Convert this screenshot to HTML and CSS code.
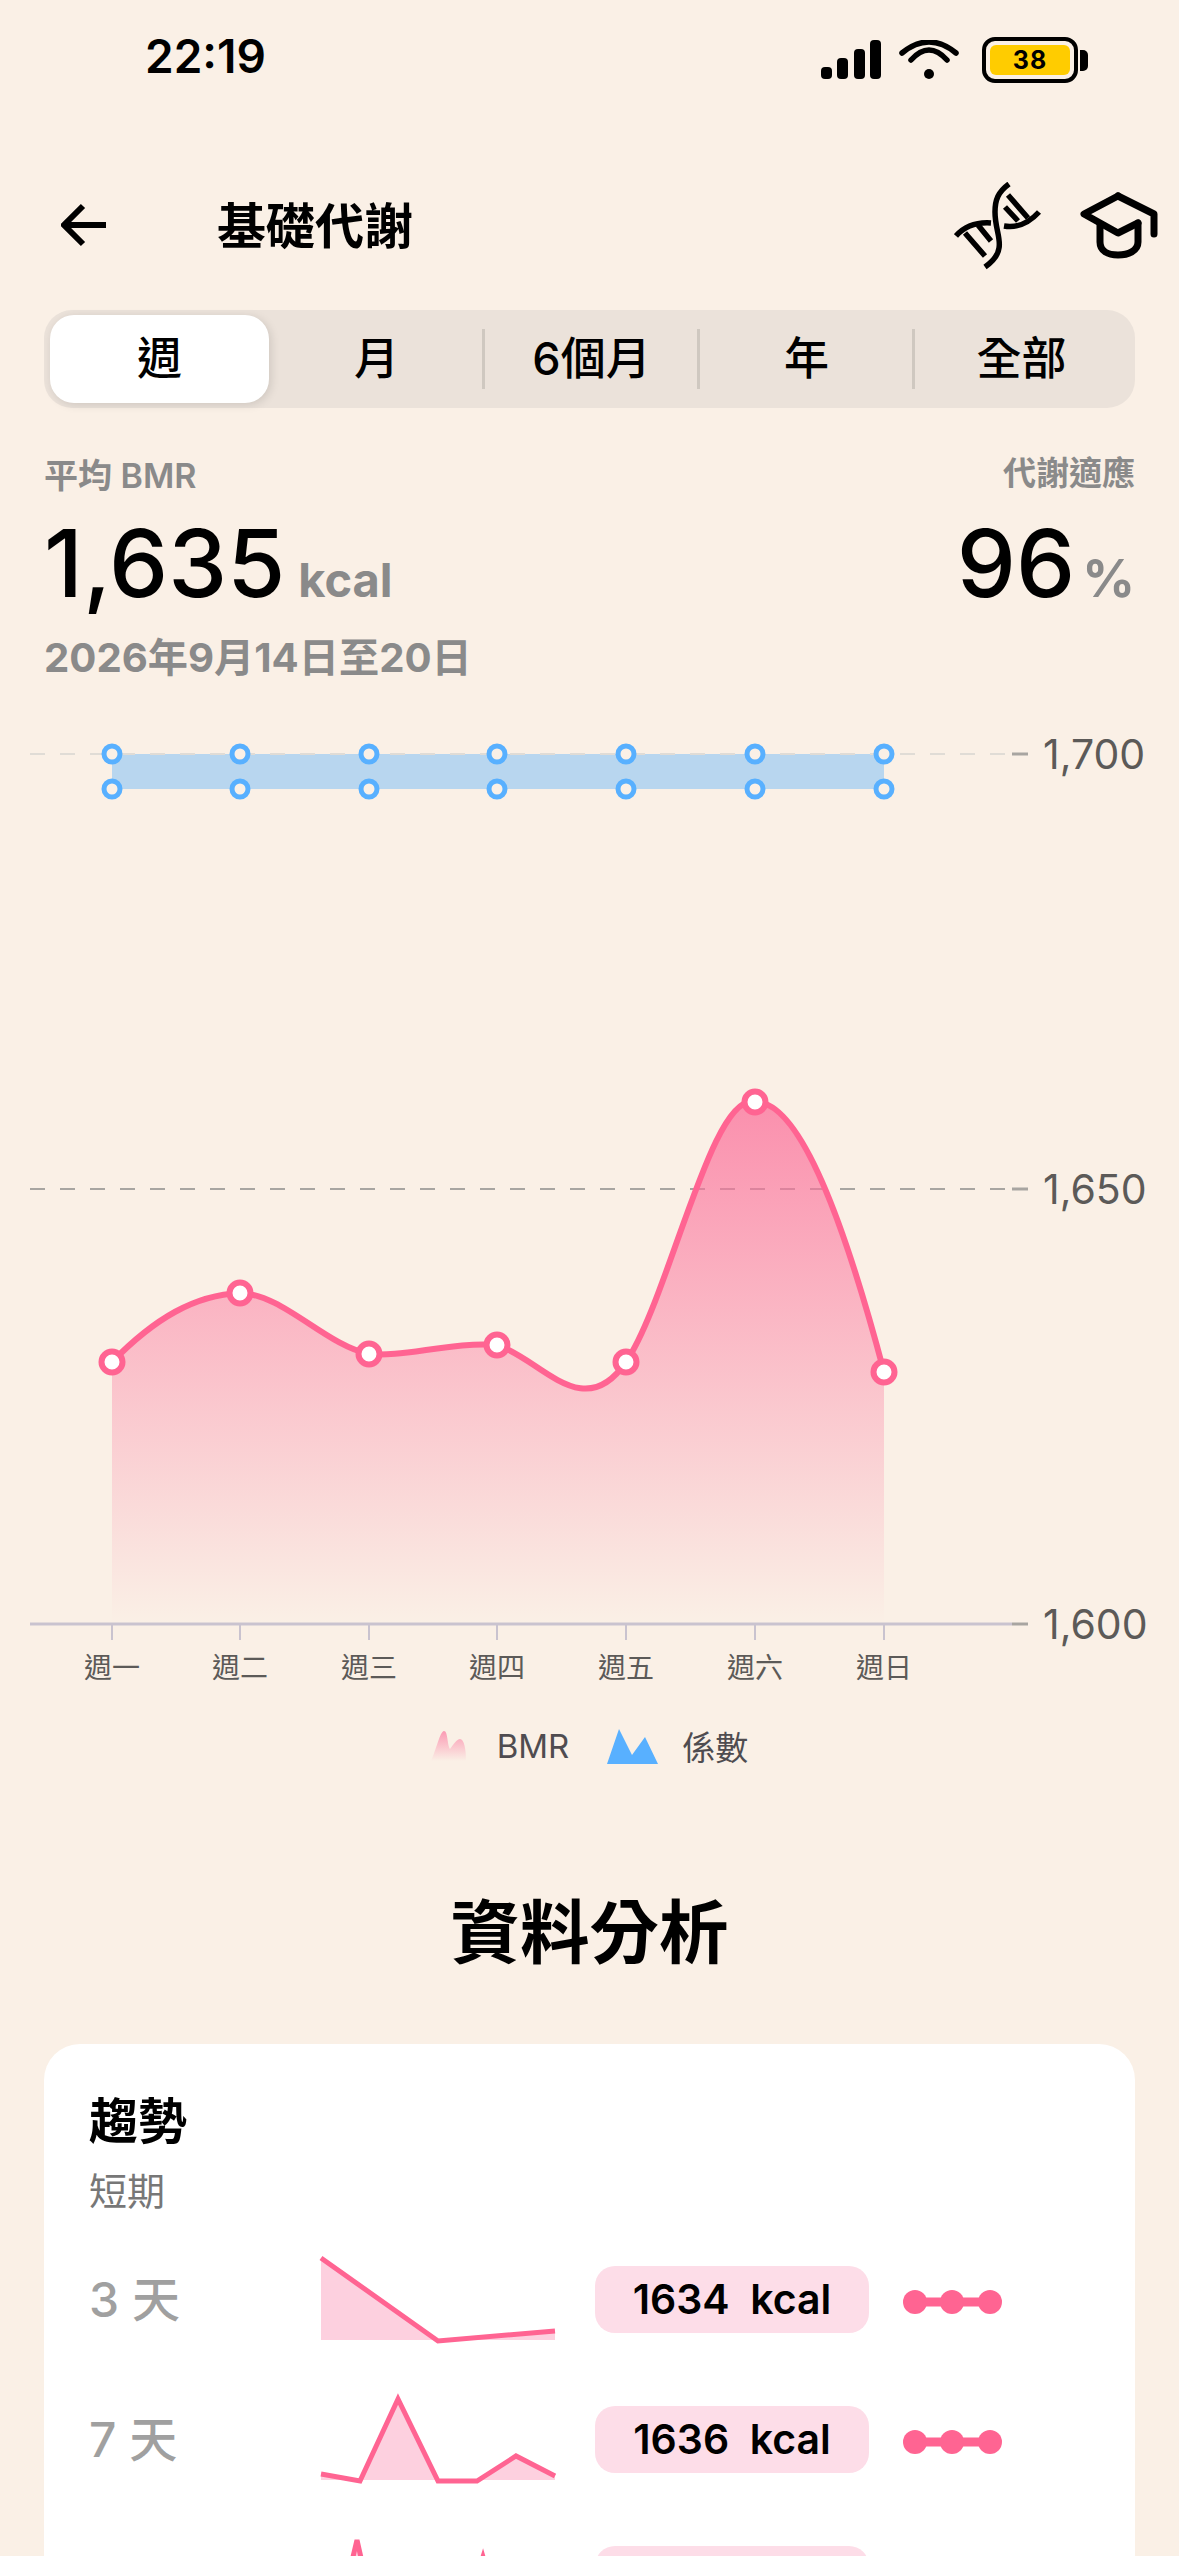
FILE: index.html
```html
<!DOCTYPE html>
<html lang="zh-Hant">
<head>
    <meta charset="UTF-8">
    <meta name="viewport" content="width=device-width, initial-scale=1.0">
    <title>基礎代謝</title>
    <link rel="stylesheet" href="styles.css">
</head>
<body>
    <div class="status-bar">
        <span class="time">22:19</span>
        <div class="status-icons">
            <svg class="signal" width="60" height="40" viewBox="0 0 60 40">
                <rect x="0" y="27" width="11" height="12" rx="4"/>
                <rect x="16" y="18" width="11" height="21" rx="4"/>
                <rect x="33" y="9" width="11" height="30" rx="4"/>
                <rect x="49" y="0" width="11" height="39" rx="4"/>
            </svg>
            <svg class="wifi" width="60" height="40" viewBox="0 0 60 40">
                <path d="M3 13 Q30 -9 57 13" fill="none" stroke="#000" stroke-width="5.5" stroke-linecap="round"/>
                <path d="M12 20 Q30 0 48 20" fill="none" stroke="#000" stroke-width="5.5" stroke-linecap="round"/>
                <circle cx="30" cy="34" r="5"/>
            </svg>
            <div class="battery">
                <div class="battery-body"><span class="battery-level">38</span></div>
                <div class="battery-cap"></div>
            </div>
        </div>
    </div>

    <div class="header">
        <svg class="back-icon" width="46" height="44" viewBox="0 0 46 44">
            <path d="M45 22 H4 M22 3 L3 22 L22 41" fill="none" stroke="#000" stroke-width="6"/>
        </svg>
        <h1 class="title">基礎代謝</h1>
        <div class="header-icons">
            <svg width="88" height="88" viewBox="0 0 88 88" fill="none" stroke="#000" stroke-width="5.5">
                <path d="M55 2 C44 10 41 18 41 30 C41 46 47 56 45 66 C44 74 38 80 31 85"/>
                <path d="M2 54 C10 45 22 40 37 41"/>
                <path d="M50 44 C62 46 74 42 85 30"/>
                <path d="M11 51 L31 74 M24 43 L37 59"/>
                <path d="M54 13 L74 36 M51 25 L64 39"/>
            </svg>
            <svg width="78" height="68" viewBox="0 0 78 68" fill="none" stroke="#000" stroke-width="7" stroke-linecap="round" stroke-linejoin="round">
                <path d="M38 4 L74 22 L74 42"/>
                <path d="M38 4 L4 22 L38 41 L58 31"/>
                <path d="M20 33 V50 C20 59 28 63 38 63 C48 63 58 59 58 50 V31"/>
            </svg>
        </div>
    </div>

    <div class="segments">
        <div class="segment active">週</div>
        <div class="segment">月</div>
        <div class="segment divided">6個月</div>
        <div class="segment divided">年</div>
        <div class="segment divided">全部</div>
    </div>

    <div class="stats">
        <div class="stat">
            <div class="stat-label">平均 BMR</div>
            <div class="stat-value">1,635<span class="stat-unit">kcal</span></div>
            <div class="stat-date">2026年9月14日至20日</div>
        </div>
        <div class="stat stat-right">
            <div class="stat-label">代謝適應</div>
            <div class="stat-value">96<span class="stat-unit">%</span></div>
        </div>
    </div>

    <svg class="chart" width="1179" height="970" viewBox="0 720 1179 970">
        <defs>
            <linearGradient id="areaFill" x1="0" y1="1100" x2="0" y2="1624" gradientUnits="userSpaceOnUse">
                <stop offset="0" stop-color="#fb6f9a" stop-opacity="0.75"/>
                <stop offset="1" stop-color="#fb6f9a" stop-opacity="0"/>
            </linearGradient>
        </defs>

        <rect x="112" y="754" width="772" height="35" class="band"/>
        <path d="M30 754 H1012" class="grid-light"/>
        <path d="M30 1189 H1012" class="grid-dark"/>
        <path d="M30 1624 H1012" class="axis"/>
        <path d="M1012 754 H1028 M1012 1189 H1028 M1012 1624 H1028" class="y-tick"/>
        <path d="M112 1624 V1640 M240 1624 V1640 M369 1624 V1640 M497 1624 V1640 M626 1624 V1640 M755 1624 V1640 M884 1624 V1640" class="x-tick"/>

        <text x="1043" y="769" class="y-label">1,700</text>
        <text x="1043" y="1204" class="y-label">1,650</text>
        <text x="1043" y="1639" class="y-label">1,600</text>

        <g class="band-dots">
            <circle cx="112" cy="754" r="8"/><circle cx="240" cy="754" r="8"/><circle cx="369" cy="754" r="8"/><circle cx="497" cy="754" r="8"/><circle cx="626" cy="754" r="8"/><circle cx="755" cy="754" r="8"/><circle cx="884" cy="754" r="8"/>
            <circle cx="112" cy="789" r="8"/><circle cx="240" cy="789" r="8"/><circle cx="369" cy="789" r="8"/><circle cx="497" cy="789" r="8"/><circle cx="626" cy="789" r="8"/><circle cx="755" cy="789" r="8"/><circle cx="884" cy="789" r="8"/>
        </g>

        <path d="M112 1362 C155 1318 195 1295 240 1293 C283 1294 325 1345 369 1354 C400 1358 455 1341 497 1345 C540 1358 583 1425 626 1362 C669 1299 712 1090 755 1102 C800 1100 845 1225 884 1372 V1624 H112 Z" fill="url(#areaFill)"/>
        <path d="M112 1362 C155 1318 195 1295 240 1293 C283 1294 325 1345 369 1354 C400 1358 455 1341 497 1345 C540 1358 583 1425 626 1362 C669 1299 712 1090 755 1102 C800 1100 845 1225 884 1372" class="line"/>
        <g class="line-dots">
            <circle cx="112" cy="1362" r="10.5"/><circle cx="240" cy="1293" r="10.5"/><circle cx="369" cy="1354" r="10.5"/><circle cx="497" cy="1345" r="10.5"/><circle cx="626" cy="1362" r="10.5"/><circle cx="755" cy="1102" r="10.5"/><circle cx="884" cy="1372" r="10.5"/>
        </g>

        <g class="x-label">
            <text x="112" y="1678">週一</text>
            <text x="240" y="1678">週二</text>
            <text x="369" y="1678">週三</text>
            <text x="497" y="1678">週四</text>
            <text x="626" y="1678">週五</text>
            <text x="755" y="1678">週六</text>
            <text x="884" y="1678">週日</text>
        </g>
    </svg>

    <div class="legend">
        <svg width="35" height="30" viewBox="0 0 35 30">
            <defs>
                <linearGradient id="legendFill" x1="0" y1="0" x2="0" y2="1">
                    <stop offset="0" stop-color="#fb9ab4"/>
                    <stop offset="1" stop-color="#fb9ab4" stop-opacity="0"/>
                </linearGradient>
            </defs>
            <path d="M0 30 C5 20 9 0 13 0 C17 0 16 13 19 18 C22 14 26 8 29 8 C33 8 35 18 35 30 Z" fill="url(#legendFill)"/>
        </svg>
        <span class="legend-text bmr">BMR</span>
        <svg class="legend-blue" width="51" height="35" viewBox="0 0 51 35">
            <path d="M0 35 L12 0 L25 26 L38 8 L51 35 Z" fill="#58b0ff"/>
        </svg>
        <span class="legend-text">係數</span>
    </div>

    <h2 class="section-title">資料分析</h2>

    <div class="card">
        <div class="card-title">趨勢</div>
        <div class="card-sub">短期</div>

        <div class="trend-row">
            <div class="trend-days">3 天</div>
            <svg class="spark" width="235" height="90" viewBox="0 0 235 90">
                <path d="M1 2 L118 85 L235 75 V84 H1 Z" class="spark-fill"/>
                <path d="M1 2 L118 85 L235 75" class="spark-line"/>
            </svg>
            <div class="trend-pill">1634&nbsp; kcal</div>
            <svg class="dumbbell" width="100" height="28" viewBox="0 0 100 28">
                <path d="M12 14 H88" class="dumbbell-bar"/>
                <circle cx="12" cy="14" r="12"/><circle cx="49" cy="14" r="12"/><circle cx="87" cy="14" r="12"/>
            </svg>
        </div>

        <div class="trend-row">
            <div class="trend-days">7 天</div>
            <svg class="spark" width="235" height="90" viewBox="0 0 235 90">
                <path d="M1 78 L40 85 L78 3 L118 85 L157 85 L196 60 L235 80 V84 H1 Z" class="spark-fill"/>
                <path d="M1 78 L40 85 L78 3 L118 85 L157 85 L196 60 L235 80" class="spark-line"/>
            </svg>
            <div class="trend-pill">1636&nbsp; kcal</div>
            <svg class="dumbbell" width="100" height="28" viewBox="0 0 100 28">
                <path d="M12 14 H88" class="dumbbell-bar"/>
                <circle cx="12" cy="14" r="12"/><circle cx="49" cy="14" r="12"/><circle cx="87" cy="14" r="12"/>
            </svg>
        </div>

        <!-- third row runs off the bottom of the screen, only its top shows -->
        <div class="trend-row">
            <div class="trend-days"></div>
            <svg class="spark" width="235" height="90" viewBox="0 0 235 90">
                <path d="M18 84 L37 4 L55 84 L144 84 L163 21 L181 84 Z" class="spark-fill"/>
                <path d="M18 84 L37 4 L55 84 L144 84 L163 21 L181 84" class="spark-line"/>
            </svg>
            <div class="trend-pill"></div>
        </div>
    </div>
</body>
</html>
```

FILE: styles.css
```css
html, body {
    height: 2556px;
    overflow: hidden;
}
body {
    font-family: Inter, "Noto Sans CJK TC", sans-serif;
    margin: 0;
    padding: 0;
    background-color: #faf0e6;
    color: #000;
}

/* status bar */
.status-bar {
    display: flex;
    justify-content: space-between;
    align-items: center;
    height: 112px;
    padding: 0 91px 0 145px;
    box-sizing: border-box;
}
.time {
    font-size: 46px;
    font-weight: 600;
}
.status-icons {
    display: flex;
    align-items: center;
    gap: 18px;
    margin-top: 8px;
}
.wifi {
    margin-right: 5px;
}
.battery {
    display: flex;
    align-items: center;
    gap: 2px;
}
.battery-body {
    width: 96px;
    height: 46px;
    box-sizing: border-box;
    border: 4px solid #000;
    border-radius: 13px;
    padding: 4px;
    display: flex;
}
.battery-level {
    flex: 1;
    background: #ffcc00;
    border-radius: 6px;
    font-size: 25px;
    font-weight: 700;
    letter-spacing: 1px;
    line-height: 30px;
    text-align: center;
}
.battery-cap {
    width: 8px;
    height: 21px;
    background: #000;
    border-radius: 0 5px 5px 0;
}

/* header */
.header {
    display: flex;
    align-items: center;
    height: 120px;
    margin-top: 54px;
    padding: 0 21px 0 61px;
}
.back-icon {
    margin-right: 110px;
    margin-bottom: 2px;
}
.title {
    flex: 1;
    margin: 0 0 8px;
    font-size: 49px;
    font-weight: 700;
}
.header-icons {
    display: flex;
    align-items: center;
    gap: 38px;
}

/* segmented control */
.segments {
    display: flex;
    align-items: center;
    margin: 24px 44px 0;
    height: 98px;
    padding: 0 6px;
    background: #ebe2da;
    border-radius: 28px;
}
.segment {
    flex: 1;
    height: 88px;
    font-size: 45px;
    font-weight: 500;
    line-height: 88px;
    text-align: center;
    position: relative;
}
.segment.active {
    flex: 0 0 219px;
    background: #fff;
    border-radius: 24px;
    box-shadow: 2px 2px 10px rgba(0, 0, 0, 0.12);
}
.segment.divided::before {
    content: "";
    position: absolute;
    left: -2px;
    top: 14px;
    bottom: 14px;
    width: 3px;
    background: #cfc8c0;
}

/* stats */
.stats {
    display: flex;
    justify-content: space-between;
    padding: 0 44px;
    margin-top: 46px;
}
.stat-label {
    font-size: 34px;
    font-weight: 600;
    color: #8a8a8a;
    line-height: 44px;
}
.stat-right .stat-label {
    font-size: 33px;
    margin-top: -3px;
}
.stat-value {
    font-size: 94px;
    font-weight: 500;
    line-height: 108px;
    margin-top: 11px;
}
.stat-right .stat-value {
    margin-top: 14px;
}
.stat-unit {
    font-size: 47px;
    font-weight: 700;
    color: #8a8a8a;
    margin-left: 13px;
}
.stat-right .stat-unit {
    font-size: 52px;
    margin-left: 7px;
}
.stat-date {
    font-size: 40.2px;
    font-weight: 700;
    color: #8a8a8a;
    line-height: 56px;
    margin-top: -4px;
}
.stat-right {
    text-align: right;
}

/* main chart */
.chart {
    display: block;
    margin-top: 34px;
}
.grid-light, .grid-dark {
    stroke-dasharray: 15 15;
    stroke-width: 2;
    fill: none;
}
.grid-light { stroke: #e0dcd6; }
.grid-dark { stroke: #a8a5a1; }
.axis {
    stroke: #c9c3cf;
    stroke-width: 3;
}
.y-tick {
    stroke: #a8a5a1;
    stroke-width: 3;
}
.x-tick {
    stroke: #c9c3cf;
    stroke-width: 2;
}
.y-label {
    font-size: 41px;
    fill: #5c5a58;
}
.band { fill: #b8d6ef; }
.band-dots circle {
    fill: #faf0e6;
    stroke: #58b0ff;
    stroke-width: 5;
}
.line {
    fill: none;
    stroke: #ff6492;
    stroke-width: 6;
}
.line-dots circle {
    fill: #fff;
    stroke: #ff6492;
    stroke-width: 6;
}
.x-label text {
    font-size: 28px;
    fill: #5c5a58;
    text-anchor: middle;
}

/* legend */
.legend {
    display: flex;
    align-items: center;
    justify-content: center;
    height: 50px;
    margin-top: 31px;
}
.legend-text {
    font-size: 33px;
    color: #4f4c50;
}
.legend-text.bmr {
    margin: 0 38px 0 31px;
}
.legend-blue {
    margin-right: 24px;
}

/* analysis */
.section-title {
    margin: 114px 0 0;
    text-align: center;
    font-size: 69.5px;
    font-weight: 700;
    line-height: 96px;
}
.card {
    margin: 63px 44px 0;
    padding: 50px 45px 0;
    background: #fff;
    border-radius: 36px;
}
.card-title {
    font-size: 49px;
    font-weight: 700;
    line-height: 56px;
}
.card-sub {
    font-size: 38px;
    color: #777;
    line-height: 52px;
    margin-top: 15px;
    margin-bottom: 12px;
}
.trend-row {
    display: flex;
    align-items: center;
    height: 140px;
}
.trend-days {
    width: 231px;
    flex: none;
    font-size: 48px;
    font-weight: 500;
    color: #a0a0a0;
    margin-bottom: 6px;
}
.spark {
    flex: none;
    overflow: visible;
    margin-top: 4px;
}
.spark-fill { fill: #fdd0df; }
.spark-line {
    fill: none;
    stroke: #ff6492;
    stroke-width: 5;
}
.trend-pill {
    margin-left: 40px;
    width: 274px;
    height: 67px;
    flex: none;
    background: #fddde8;
    border-radius: 20px;
    font-size: 41px;
    font-weight: 600;
    line-height: 67px;
    text-align: center;
}
.dumbbell {
    margin-left: 34px;
    margin-top: 5px;
    fill: #ff6492;
}
.dumbbell-bar {
    stroke: #ff6492;
    stroke-width: 9;
}
```
